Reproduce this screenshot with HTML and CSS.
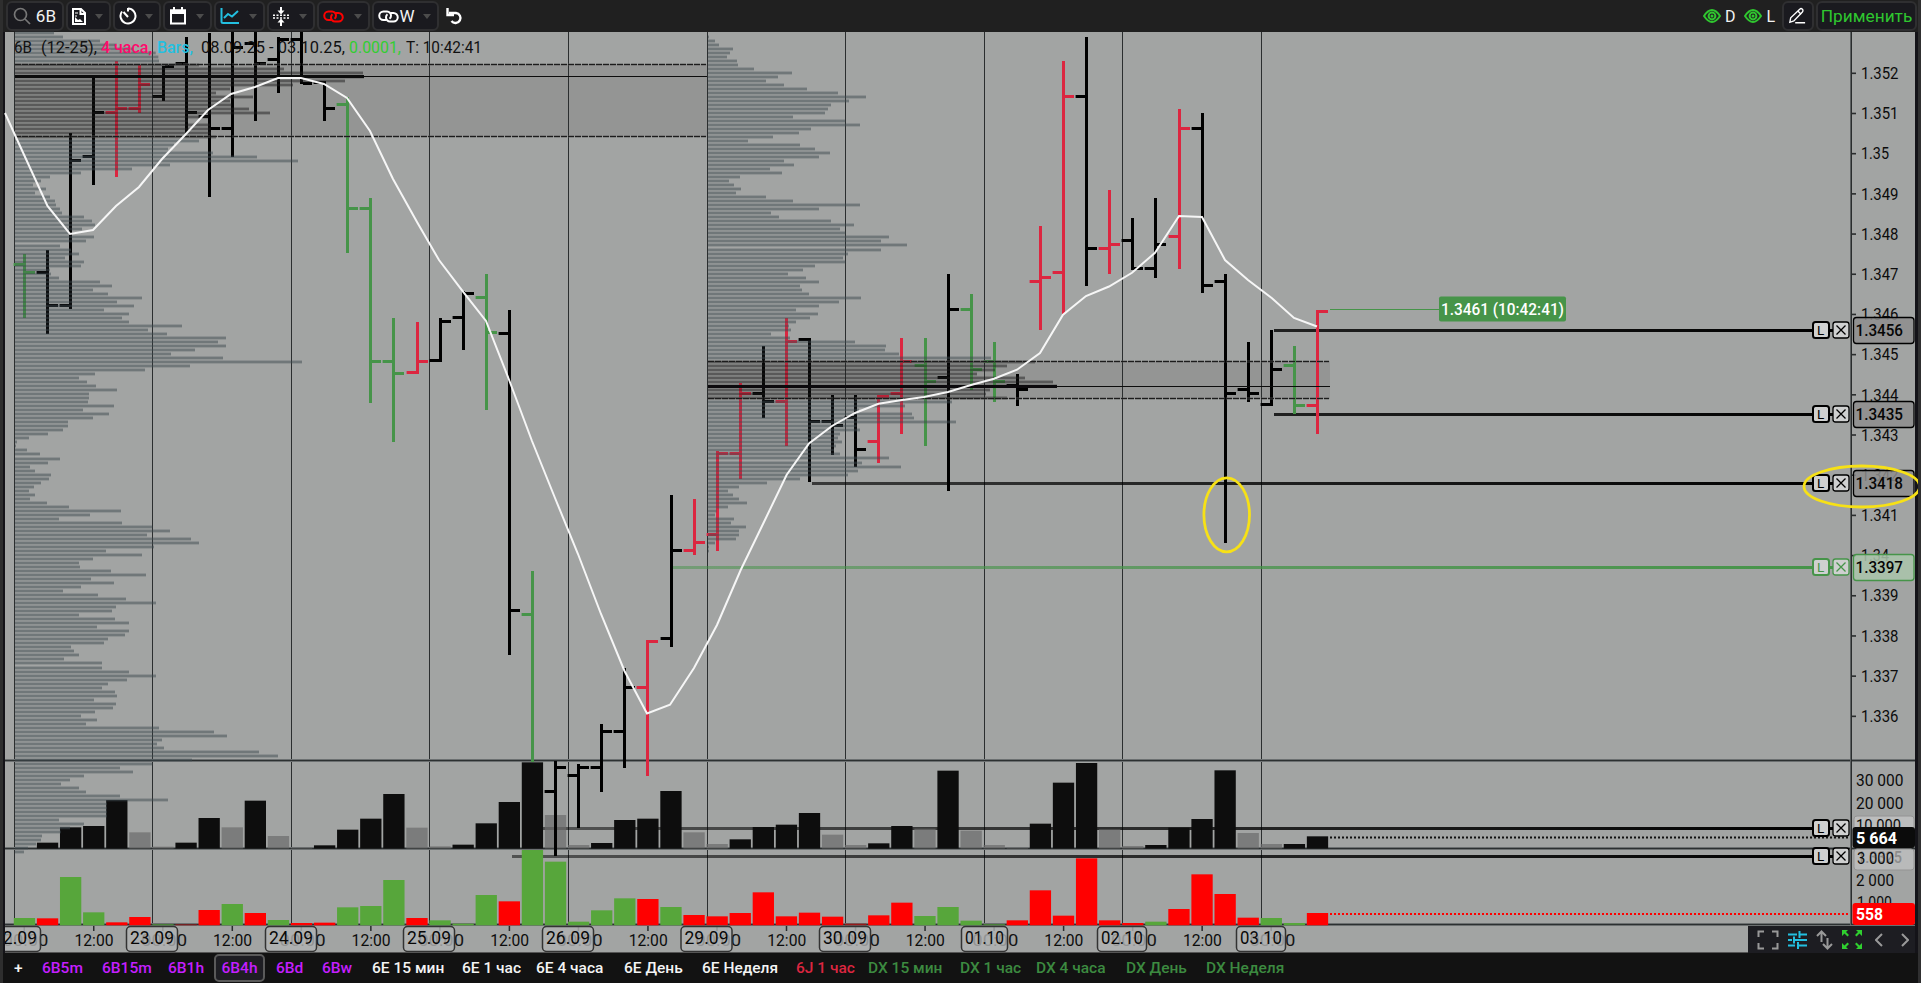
FILE: index.html
```
<!DOCTYPE html>
<html lang="ru">
<head>
  <meta charset="UTF-8" />
  <title>6B (12-25)</title>
  <link rel="stylesheet" href="styles.css">
</head>
<body>

  <header class="toolbar">
    <div class="tool tool-search">
      <svg width="18" height="18" viewBox="0 0 18 18"><circle cx="7.5" cy="7.5" r="6" class="line-dim"/><path d="M12 12l5 5" class="line-dim"/></svg>
      <span>6B</span>
    </div>
    <div class="tool tool-file">
      <svg width="14" height="17" viewBox="0 0 14 17"><path d="M1 1h8l4 4v11H1z" class="line"/><path d="M8.500 1v5H13" class="line"/><path d="M3 14V9l3 3 2-1 3 3z" fill="#fff"/><path d="M3 5h3M3 8h2" class="line thin"/></svg>
      <i class="caret"></i>
    </div>
    <div class="tool tool-time">
      <svg width="18" height="18" viewBox="0 0 18 18"><path d="M9 1.500a7.500 7.500 0 1 1-6 3" class="line"/><path d="M9 10L4.500 5" class="line"/><path d="M9 1v3.500" class="line"/></svg>
      <i class="caret"></i>
    </div>
    <div class="tool tool-date">
      <svg width="18" height="18" viewBox="0 0 18 18"><path d="M2 3.500h14v13H2z" class="line"/><path d="M1 2.500h16V7H1z" fill="#fff"/><path d="M5 0v4M13 0v4" class="line"/></svg>
      <i class="caret"></i>
    </div>
    <div class="tool tool-chart">
      <svg width="20" height="18" viewBox="0 0 20 18"><path d="M1.500 1v13.500a1.500 1.500 0 0 0 1.500 1.500h16" class="line-cyan"/><path d="M4 11l4-4 4 2.500L18 4" class="line-cyan"/></svg>
      <i class="caret"></i>
    </div>
    <div class="tool tool-scale">
      <svg width="16" height="19" viewBox="0 0 16 19"><path d="M8 0v6M8 19v-6" class="line"/><path d="M4.500 3.500L8 7.500l3.500-4zM4.500 15.500L8 11.500l3.500 4z" fill="#fff"/><path d="M0 8.300h16M0 11h16" class="line dots"/></svg>
      <i class="caret"></i>
    </div>
    <div class="tool tool-link">
      <svg width="21" height="13" viewBox="0 0 21 13"><path d="M8.500 10H5.500a4 4 0 0 1 0-8.500h3.500a4 4 0 0 1 4 4.200c0 1.300-.6 2.300-1.500 3" class="line-red"/><path d="M12.500 3h3a4 4 0 0 1 0 8.500H12a4 4 0 0 1-4-4.200c0-1.300.6-2.300 1.500-3" class="line-red"/></svg>
      <i class="caret"></i>
    </div>
    <div class="tool tool-linkw">
      <svg width="21" height="13" viewBox="0 0 21 13"><path d="M8.500 10H5.500a4 4 0 0 1 0-8.500h3.500a4 4 0 0 1 4 4.200c0 1.300-.6 2.300-1.500 3" class="line"/><path d="M12.500 3h3a4 4 0 0 1 0 8.500H12a4 4 0 0 1-4-4.200c0-1.300.6-2.300 1.500-3" class="line"/></svg>
      <span>W</span>
      <i class="caret"></i>
    </div>
    <svg class="undo" width="17" height="17" viewBox="0 0 17 17"><path d="M3 5h7a5 5 0 1 1-4.500 8" class="line wide"/><path d="M1.500 0v7h6.500" class="line wide"/></svg>

    <div class="toggles">
      <svg width="18" height="14" viewBox="0 0 18 14"><path d="M1 7q8-12 16 0q-8 12-16 0z" class="line-green"/><circle cx="9" cy="7" r="3.400" class="line-green"/><circle cx="9" cy="7" r="1.500" fill="#2fc62f"/></svg>
      <span>D</span>
      <svg width="18" height="14" viewBox="0 0 18 14"><path d="M1 7q8-12 16 0q-8 12-16 0z" class="line-green"/><circle cx="9" cy="7" r="3.400" class="line-green"/><circle cx="9" cy="7" r="1.500" fill="#2fc62f"/></svg>
      <span>L</span>
    </div>
    <div class="tool tool-pencil">
      <svg width="20" height="18" viewBox="0 0 20 18"><path d="M2 16l1-5L13 1.500a2 2 0 0 1 3 3L6.500 14.500z" class="line-thin"/><path d="M11 3.500l3.500 3.500M8 16.500h11" class="line-thin"/></svg>
    </div>
    <div class="tool tool-apply">Применить</div>
  </header>

  <main class="chart">
    <svg id="chart" width="1910" height="921" viewBox="5 32 1910 921"></svg>
    <div class="chart-tools">
      <svg width="22" height="20" viewBox="0 0 22 20"><path d="M1.500 7V1.500H7M15 1.500h5.500V7M20.500 13v5.500H15M7 18.500H1.500V13" class="line-gray"/></svg>
      <svg width="19" height="18" viewBox="0 0 19 18"><path d="M0 3.500h9M12 3.500h7M0 9h4M7 9h12M0 14.500h7M10 14.500h9M11.500 0v7M6 5.500v7M10 11v7" class="line-cyan"/></svg>
      <svg width="17" height="20" viewBox="0 0 17 20"><path d="M5.500 12V1.500M1 6l4.500-4.500L10 6M11.500 8v10.500M7 14l4.500 4.500L16 14" class="line-gray"/></svg>
      <svg width="20" height="19" viewBox="0 0 20 19"><path d="M0 0h6L4 2l3 3-1.500 1.500-3-3L0 6zM20 0h-6l2 2-3 3 1.500 1.500 3-3L20 6zM0 19h6l-2-2 3-3-1.500-1.500-3 3L0 13zM20 19h-6l2-2-3-3 1.500-1.500 3 3L20 13z" fill="#2fd02f"/></svg>
      <svg class="prev" width="8" height="14" viewBox="0 0 8 14"><path d="M7 1L1 7l6 6" class="line-gray"/></svg>
      <svg class="next" width="8" height="14" viewBox="0 0 8 14"><path d="M1 1l6 6-6 6" class="line-gray"/></svg>
    </div>
  </main>

  <nav class="tabs">
    <a>+</a>
    <a class="pound">6B5m</a>
    <a class="pound">6B15m</a>
    <a class="pound">6B1h</a>
    <a class="pound active">6B4h</a>
    <a class="pound">6Bd</a>
    <a class="pound">6Bw</a>
    <a>6E 15 мин</a>
    <a>6E 1 час</a>
    <a>6E 4 часа</a>
    <a>6E День</a>
    <a>6E Неделя</a>
    <a class="yen">6J 1 час</a>
    <a class="index">DX 15 мин</a>
    <a class="index">DX 1 час</a>
    <a class="index">DX 4 часа</a>
    <a class="index">DX День</a>
    <a class="index">DX Неделя</a>
  </nav>

  <script src="chart.js"></script>
</body>
</html>
```
FILE: styles.css
```
* {
  box-sizing: border-box;
}
body {
  margin: 0;
  width: 1921px;
  height: 983px;
  overflow: hidden;
  display: flex;
  flex-direction: column;
  background: #121212;
  font-family: Roboto, "Noto Sans", sans-serif;
  border-left: 3px solid #2e2e2e;
  border-right: 3px solid #2f2f30;
}

/* top toolbar */
.toolbar {
  height: 32px;
  flex: none;
  display: flex;
  align-items: center;
  gap: 2px;
  padding: 0 1px 0 3px;
  background: #202020;
  color: #f2f2f2;
  font-size: 17px;
}
.tool {
  height: 30px;
  display: flex;
  align-items: center;
  justify-content: space-between;
  padding: 0 6px 0 4px;
  border: 2px solid #2f2f31;
  border-radius: 6px;
  background: #1a1a1f;
}
.tool-search { width: 58px; padding: 0 6px 0 5px; }
.tool-file { width: 45px; }
.tool-time { width: 48px; }
.tool-date { width: 49px; }
.tool-chart { width: 51px; }
.tool-scale { width: 48px; }
.tool-link { width: 53px; }
.tool-linkw { width: 67px; }
.tool-linkw .caret { margin-left: 8px; }
.tool-pencil { width: 32px; }
.tool-apply {
  width: 101px;
  padding: 0 4px;
  justify-content: center;
  color: #2fc62f;
  font-size: 17.300px;
}
.caret {
  border: 4px solid transparent;
  border-top: 5px solid #4c4c4c;
  border-bottom: 0;
}
.undo {
  margin-left: 5px;
}
.toggles {
  margin-left: auto;
  display: flex;
  align-items: center;
  gap: 4px;
}
.toggles span {
  margin-right: 5px;
  font-size: 16px;
}

/* icon strokes */
.line, .line-dim, .line-cyan, .line-red, .line-green, .line-gray, .line-thin {
  fill: none;
  stroke: #fff;
  stroke-width: 2;
}
.line.thin { stroke-width: 1; }
.line.wide { stroke-width: 2.400; }
.line.dots { stroke-width: 1.500; stroke-dasharray: 2 1.500; }
.line-thin { stroke-width: 1.500; }
.line-dim { stroke: #777; stroke-width: 1.700; }
.line-cyan { stroke: #23bfe0; }
.line-red { stroke: #f00; }
.line-green { stroke: #2fc62f; }
.line-gray { stroke: #999; }

/* chart */
.chart {
  position: relative;
  height: 921px;
  flex: none;
  padding-left: 2px;
  background: #141318;
}
.chart svg {
  display: block;
}
#chart {
  overflow: visible;
}
#chart text {
  white-space: pre;
}
.chart-tools {
  position: absolute;
  right: 3px;
  bottom: 0;
  width: 167px;
  height: 27px;
  display: flex;
  align-items: center;
  gap: 9px;
  padding-left: 9px;
  background: #1d1d22;
}
.prev { margin-left: 4px; }
.next { margin-left: 9px; }

/* bottom tabs */
.tabs {
  height: 30px;
  display: grid;
  grid-template-columns: 28px 60px 66px 52px 56px 46px 50px 90px 74px 88px 78px 94px 72px 92px 76px 90px 80px 90px;
  align-items: center;
  padding-left: 11px;
  background: #121212;
  color: #f4f4f4;
  font-size: 15.500px;
  font-weight: 500;
  white-space: nowrap;
}
.pound { color: #c41fff; }
.yen { color: #dc2640; }
.index { color: #3c8a40; }
.active {
  margin-left: -6px;
  width: 51px;
  height: 28px;
  line-height: 24px;
  text-align: center;
  border: 2px solid #5a5a5a;
  border-radius: 5px;
  background: #1e1e23;
}
```
FILE: chart.js
```
const svg = document.getElementById('chart');
const NS = 'http://www.w3.org/2000/svg';

const BLACK = '#000';
const RED = '#dc2640';
const GREEN = '#469449';
const colors = { k: BLACK, r: RED, g: GREEN };

const barX = n => Math.round(23 + 23.09 * n);

function add(tag, attrs, text) {
  const el = document.createElementNS(NS, tag);
  for (const key in attrs) el.setAttribute(key, attrs[key]);
  if (text !== undefined) el.textContent = text;
  svg.appendChild(el);
  return el;
}
function rect(x, y, width, height, fill, more) {
  return add('rect', Object.assign({ x, y, width, height, fill }, more));
}
// text stretched between x and x2
function label(str, x, x2, y, size, fill, weight) {
  return add('text', { x, y, fill, 'font-size': size, 'font-weight': weight || 400, textLength: x2 - x, lengthAdjust: 'spacingAndGlyphs' }, str);
}

add('defs', {}).innerHTML = `
  <linearGradient id="fadeBlack"><stop offset="0" stop-color="#000" stop-opacity=".5"/><stop offset="1" stop-color="#000"/></linearGradient>
  <linearGradient id="fadeDark"><stop offset="0" stop-color="#000" stop-opacity=".65"/><stop offset="1" stop-color="#000"/></linearGradient>
  <linearGradient id="fadeNear"><stop offset="0" stop-color="#000" stop-opacity=".8"/><stop offset="1" stop-color="#000"/></linearGradient>
  <linearGradient id="fadeGreen"><stop offset="0" stop-color="#469449" stop-opacity=".5"/><stop offset="1" stop-color="#469449"/></linearGradient>
  <clipPath id="area"><rect x="5" y="32" width="1910" height="921"/></clipPath>`;

rect(5, 32, 1910, 921, '#a2a4a3');

// value areas
rect(15, 64, 692, 73, '#949594');
rect(708, 361, 622, 38, '#949594');

// day lines
[14, 152, 291, 429, 568, 707, 845, 984, 1122, 1261].forEach(x => rect(x, 32, 1, 893, '#2b2e2f'));

// pane borders
[760, 848, 924].forEach(y => {
  rect(5, y - 1, 1910, 3, '#6c7071');
  rect(5, y, 1910, 1, '#2c3031');
});
rect(1850, 32, 1, 893, '#5c6061');
rect(1851, 32, 1, 893, '#2a2d2e');

// levels
rect(543, 827, 1270, 3, 'url(#fadeBlack)');
rect(512, 855, 1300, 3, 'url(#fadeBlack)');
rect(1274, 329, 540, 3, 'url(#fadeNear)');
rect(1274, 413, 540, 3, 'url(#fadeNear)');
rect(812, 482, 1000, 3, 'url(#fadeDark)');
rect(673, 566, 1140, 3, 'url(#fadeGreen)');

// volume: top of each bar, g = grey
const volume = [
  0, 308, 262, 258, 180, '277g', '320g', 308, 234, '262g', 182, '288g', '323g', 316, 269, 236, 162, '263g',
  '319g', 314, 250, 186, 67, '225g', '315g', 309, 240, 236, 153, '277g', '312g', 298, 261, 254, 219, '284g',
  '315g', 310, 258, '266g', 92, '272g', '315g', '323g', 251, 128, 69, '268g', '318g', 315, 263, 237, 91, '279g',
  '312g', 312, 289
];
volume.forEach((v, n) => {
  if (!v) return;
  const top = 740 + parseInt(v) / 3;
  const grey = String(v).endsWith('g');
  rect(13.800 + 23.090 * n, top, 21.300, 848.500 - top, grey ? '#6b6b6b' : '#0d0d0d', { opacity: grey ? .7 : 1 });
});

// delta: green or red
const delta = ('g534 r535 g411 g517 r547 r531 g553 d553 r510 g492 r519 g540 r549 r548 g502 g498 g420 r534 g541 g551 ' +
  'g465 r484 g330 g365 g545 g511 g475 r477 g501 r525 r529 r519 r457 r529 r518 r530 d551 r526 r488 g528 g501 g542 ' +
  'g553 r541 r451 r527 r355 r541 r549 g545 r507 r403 r462 r533 g534 g549 r519').split(' ');
delta.forEach((d, n) => {
  const top = 740 + d.slice(1) / 3;
  const fill = { g: '#57a63b', r: '#f00', d: '#981b1b' }[d[0]];
  rect(13.800 + 23.090 * n, top, 21.300, 925.300 - top, fill);
});

// color, open, high, low, close
const bars = [
  ['g', 264, 254, 318, 272], ['k', 272, 250, 334, 305], ['k', 305, 133, 309, 160], ['k', 156, 78, 185, 112],
  ['r', 112, 61, 177, 108], ['r', 108, 65, 113, 84], ['k', 96, 66, 101, 66], ['k', 63, 37, 133, 112],
  ['k', 116, 33, 197, 128], ['k', 128, 32, 157, 47], ['k', 43, 32, 121, 63], ['k', 59, 37, 93, 39],
  ['k', 39, 32, 84, 83], ['k', 82, 81, 121, 108], ['g', 104, 97, 253, 208], ['g', 208, 198, 403, 361],
  ['g', 361, 318, 442, 373], ['r', 372, 322, 374, 361], ['k', 360, 318, 362, 321], ['k', 317, 291, 350, 293],
  ['g', 297, 274, 410, 332], ['k', 333, 310, 655, 610], ['g', 614, 571, 763, 0], ['k', 791, 761, 856, 767],
  ['k', 775, 764, 828, 767], ['k', 767, 724, 792, 731], ['k', 731, 668, 768, 687], ['r', 687, 640, 776, 641],
  ['k', 638, 495, 647, 550], ['r', 550, 499, 555, 542], ['r', 534, 451, 551, 453], ['r', 453, 383, 479, 393],
  ['k', 393, 346, 418, 401], ['r', 401, 318, 446, 341], ['k', 339, 338, 482, 421], ['k', 421, 395, 455, 425],
  ['k', 417, 395, 467, 449], ['r', 441, 395, 463, 396], ['r', 393, 338, 434, 361], ['g', 365, 338, 446, 381],
  ['k', 377, 274, 491, 309], ['g', 309, 294, 390, 369], ['g', 361, 342, 402, 381], ['k', 385, 374, 406, 389],
  ['r', 281, 226, 330, 277], ['r', 272, 61, 314, 96], ['k', 96, 37, 286, 248], ['r', 248, 190, 274, 244],
  ['k', 240, 218, 270, 268], ['k', 268, 198, 278, 244], ['r', 236, 109, 269, 128], ['k', 128, 113, 293, 285],
  ['k', 281, 274, 543, 393], ['k', 389, 342, 402, 393], ['k', 404, 330, 406, 369], ['g', 365, 346, 414, 405],
  ['r', 405, 310, 434, 311]
];
bars.forEach(([c, open, high, low, close], n) => {
  const x = barX(n);
  // the volume column hides the end of this one
  rect(x, high, 3, (n === 22 ? 762 : low) - high, colors[c]);
  rect(x - 9, open - 1, 9, 3, colors[c]);
  rect(x - 10, open - 1, 1, 3, colors[c], { opacity: .4 });
  if (close) rect(x + 3, close - 1, 9, 3, colors[c]);
});

// market profiles, row ends in thirds of a pixel
const profile1 = [
  162, 189, 300, 350, 400, 467, 475, 477, 597, 852, 1089, 1092, 1035, 879, 690, 648, 759, 690, 695, 747, 810,
  625, 564, 630, 632, 632, 648, 597, 522, 504, 639, 771, 894, 510, 396, 243, 150, 123, 99, 138, 105, 150, 165,
  168, 180, 186, 252, 276, 285, 246, 210, 282, 258, 180, 213,
  237, 195, 252, 243, 150, 153, 177, 300, 336, 279, 324, 426, 351, 402, 312, 387, 366, 387, 546, 444, 501, 678,
  654, 678, 585, 513, 669, 906, 570, 435, 285, 237, 261, 288, 351, 267, 267, 264, 342, 249, 327, 279, 204, 204,
  189, 144, 87, 51, 48, 81, 120, 180, 144, 90, 105, 153, 147, 123, 102, 87, 105, 90, 141, 207, 363, 270, 177,
  366, 457, 510, 441, 573,
  597, 462, 318, 426, 279, 237, 240, 333, 438, 273, 342, 243, 189, 294, 378, 468, 348, 336, 237, 345, 387, 291,
  387, 375, 324, 312, 213, 222, 237, 192, 306, 306, 387, 468, 381, 324, 306, 345, 351, 282, 348, 339, 285, 243,
  291, 258, 477, 642, 681, 486, 471, 492, 777, 834, 576,
  457, 360, 399, 252, 210, 183, 237, 258, 360, 504, 321, 321, 321, 321, 177, 252, 210, 183, 126, 123, 108, 84, 72
];
const profile2 = [
  57, 75, 87, 129, 120, 111, 141, 144, 192, 306, 264, 228, 282, 351, 444, 528, 477, 423, 414, 405, 309, 466, 510,
  363, 327, 249, 174, 330, 375, 420, 387, 282, 312, 240, 276, 150, 117, 132, 153, 138, 228, 309, 510, 387, 243,
  267, 423, 492, 450, 466, 597, 573, 651, 573, 474, 459, 466, 375, 339, 294, 348, 387, 330, 336,
  357, 513, 447, 387, 318, 384, 360, 318, 297, 303, 243, 300, 495, 588, 585, 627, 903, 1035, 951, 915, 861, 1005,
  1089, 1101, 900, 888, 951, 786, 645, 507, 666, 672, 798, 500, 510, 450, 444, 456, 438, 432, 450, 597, 516, 633,
  504, 474, 330, 231, 147, 114, 129, 147, 171, 114, 80, 75, 132, 123, 168, 147, 147, 138, 75, 57, 57
];
function drawProfile(rows, left, base, firstY, vaTop, vaBottom) {
  rows.forEach((end, k) => {
    const y = Math.round(firstY + 4.019 * k);
    const inside = y > vaTop && y < vaBottom;
    const w = base + end / 3 - left;
    const rgb = inside ? '#1e1e1e' : '#3e4a50';
    rect(left, y - 1, w, 2, rgb, { opacity: .5 });
    rect(left, y - 2, w, 1, rgb, { opacity: .22 });
    rect(left, y + 1, w, 1, rgb, { opacity: .18 });
  });
}
drawProfile(profile1, 15, 0, 32.500, 62, 138);
drawProfile(profile2, 708, 690, 36.500, 360, 400);

[[15, 706, 64], [15, 706, 136], [708, 1329, 361], [708, 1329, 398]].forEach(([x1, x2, y]) => {
  add('line', { x1, x2, y1: y + .5, y2: y + .5, stroke: '#555', 'stroke-width': 2.500, 'stroke-dasharray': '6 1', opacity: .5 });
  add('line', { x1, x2, y1: y + .5, y2: y + .5, stroke: '#1c1c1c', 'stroke-width': 1, 'stroke-dasharray': '6 1' });
});
rect(15, 75, 349, 3, '#0c0c0c');
rect(364, 76, 343, 1, '#0c0c0c');
rect(708, 385, 349, 3, '#0c0a0d');
rect(1057, 386, 273, 1, '#0c0c0c');

// moving average
const average = [
  [5, 113], [14.5, 134], [47.5, 206], [70, 234], [93, 230], [116, 206], [139, 187], [162, 159], [185, 135], [208, 110],
  [231, 94], [255, 87], [278, 78], [301, 78], [324, 84], [347, 98], [370, 131], [393, 179], [417, 222], [439, 260],
  [463, 291.7], [486, 321], [509.5, 381], [532, 441], [555, 498], [578, 554], [601, 614], [624.5, 671], [647, 713.5],
  [670, 704.7], [694, 668], [717, 625], [740.7, 570], [763, 524], [786.7, 474.7], [809, 443.5], [832, 426], [855, 413],
  [878.5, 403.7], [902, 400], [924, 397], [948, 392], [971, 385], [994, 378.7], [1017, 369.7], [1040, 353], [1063, 314.7],
  [1086, 296], [1109, 286.5], [1132, 272.8], [1155, 252.8], [1179, 216], [1202, 217], [1225, 260], [1248, 280],
  [1272, 298.2], [1294, 317.9], [1317, 326.5]
];
add('polyline', { points: average.join(' '), fill: 'none', stroke: '#f6f6f6', 'stroke-width': 2 });

// current values
add('line', { x1: 1330, x2: 1850, y1: 837.500, y2: 837.500, stroke: '#111', 'stroke-width': 2, 'stroke-dasharray': '2 2' });
add('line', { x1: 1330, x2: 1850, y1: 914, y2: 914, stroke: '#f00', 'stroke-width': 2, 'stroke-dasharray': '2 2' });
rect(1330, 309, 110, 1, GREEN);
rect(1439, 296.500, 127, 25, GREEN, { rx: 2 });
label('1.3461 (10:42:41)', 1441, 1564, 314.500, 16, '#fff', 500);

// header
label('6B', 14, 32, 53, 17, '#111');
label('(12-25),', 41, 97, 53, 17, '#111');
label('4 часа,', 101, 152, 53, 17, '#ff0a6c', 500);
label('Bars,', 157, 193, 53, 17, '#23c0e0', 500);
label('08.09.25 - 03.10.25,', 201, 345, 53, 17, '#111');
label('0.0001,', 349, 401, 53, 17, '#32cd32');
label('T: 10:42:41', 406, 482, 53, 17, '#111');

// price axis
for (let i = 0; i <= 16; i++) {
  const y = 73.300 + i * 40.190;
  const price = String((1352 - i) / 1000);
  rect(1852, y - .8, 4, 1.600, '#2a2d2e');
  label(price, 1861, price.length === 4 ? 1889 : 1898.500, y + 5.700, 16.500, '#0c0c0c');
}
function buttons(y, color) {
  rect(1829, y - 1.500, 4, 3, color);
  rect(1813, y - 8.500, 16, 16, '#cfd0d0', { rx: 2.500, stroke: color, 'stroke-width': 2 });
  add('text', { x: 1817, y: y + 4.500, 'font-size': 13.500, fill: color }, 'L');
  rect(1833, y - 8.500, 16, 16, '#cfd0d0', { rx: 2.500, stroke: color, 'stroke-width': 1.300 });
  add('path', { d: `M1836.500 ${y - 5}l9 9m0 -9l-9 9`, stroke: color, 'stroke-width': 1.300 });
}
[[330, '1.3456'], [414, '1.3435'], [483, '1.3418'], [567, '1.3397']].forEach(([y, price]) => {
  const green = price === '1.3397';
  const color = green ? GREEN : BLACK;
  rect(1853.500, y - 12.500, 60.500, 26, green ? '#aac5ab' : '#8e8e8e', { rx: 3, stroke: color, 'stroke-width': 1.300, 'fill-opacity': .85 });
  buttons(y + .5, color);
  label(price, 1855.500, 1903, y + 6, 17, '#060606', 500);
});

// volume and delta axis
rect(1854, 816, 60, 22, '#bcbdbd', { rx: 3, stroke: '#949494' });
label('30 000', 1856, 1903.500, 785.500, 16.500, '#0c0c0c');
label('20 000', 1856, 1903.500, 808.500, 16.500, '#0c0c0c');
label('10 000', 1856, 1901, 831, 16.500, '#0c0c0c');
rect(1852.500, 827, 62.500, 21, '#0b0b0b', { rx: 3 });
label('5 664', 1856, 1897, 843.500, 16.500, '#fff', 700);
rect(1854, 849, 60, 21, '#b9baba', { rx: 3, stroke: '#949494' });
label('1.3325', 1857, 1902, 863, 17, '#8c8c8c', 500);
label('3 000', 1857, 1894, 863.500, 16.500, '#0c0c0c');
label('2 000', 1856, 1894, 886, 16.500, '#0c0c0c');
label('1 000', 1857, 1892, 907.500, 16.500, '#0c0c0c');
rect(1852.500, 903, 62.500, 22, '#f00', { rx: 3 });
label('558', 1856, 1883, 920, 16.500, '#fff', 700);
buttons(828.500, BLACK);
buttons(856.500, BLACK);

// time axis
const days = [
  ['22.09', -11], ['23.09', 126], ['24.09', 265], ['25.09', 403], ['26.09', 542], ['29.09', 680.500], ['30.09', 819],
  ['01.10', 961, 47], ['02.10', 1097, 50], ['03.10', 1236, 50]
];
days.forEach(([day, x, w = 52], i) => {
  const clip = { 'clip-path': 'url(#area)' };
  const mid = 24.500 + i * 138.550;
  rect(mid - 1, 926, 1.500, 5, '#2a2d2e');
  label('00:00', mid - 22, mid + 24, 946, 17, '#151515').setAttribute('clip-path', 'url(#area)');
  rect(x + .5, 926.500, w - 1, 25, '#b2b3b3', Object.assign({ rx: 4, stroke: '#333', 'stroke-width': 1.500, 'fill-opacity': .8 }, clip));
  label(day, x + 4, x + w - 4, 944, 18, '#080808').setAttribute('clip-path', 'url(#area)');
  if (i < 9) {
    rect(mid + 68.500, 926, 1.500, 5, '#2a2d2e');
    label('12:00', mid + 50, mid + 89, 946, 17, '#0c0c0c');
  }
});
rect(5, 952, 1743, 1, '#555');

// hand-drawn marks
add('ellipse', { cx: 1226.700, cy: 514.800, rx: 22.800, ry: 37, fill: 'none', stroke: '#f7e116', 'stroke-width': 2.800 });
add('ellipse', { cx: 1861.800, cy: 486.500, rx: 57.800, ry: 20.500, fill: 'none', stroke: '#f7e116', 'stroke-width': 2.800 });
```
